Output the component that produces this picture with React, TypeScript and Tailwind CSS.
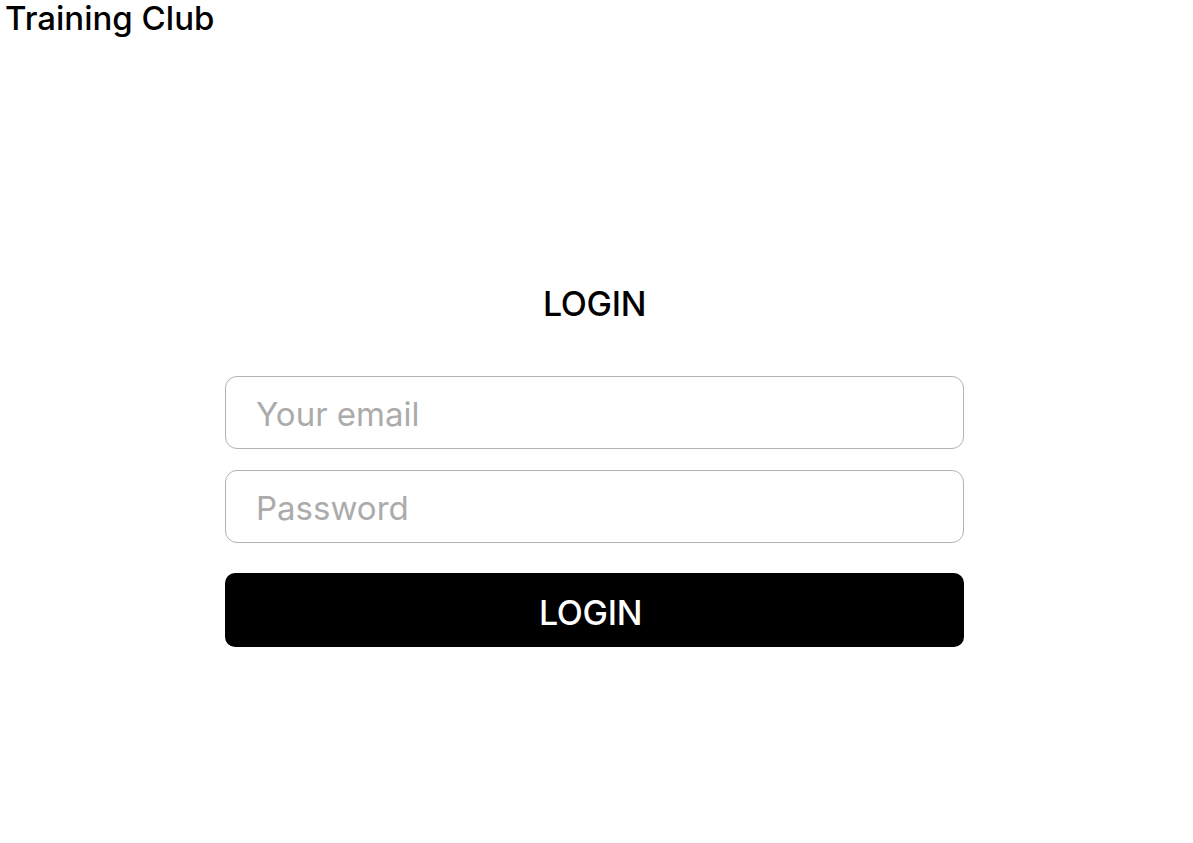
export default function App() {
  return (
    <div className="min-h-screen bg-white text-black" style={{ fontFamily: "Inter, 'Noto Sans', sans-serif" }}>
      <header className="px-[5px]">
        <h1 className="text-[33px] font-medium leading-[36px]">Training Club</h1>
      </header>

      <main className="flex flex-col items-center pt-[248px] pr-[4px]">
        <h2 className="text-[34px] font-medium leading-[40px] tracking-[-0.3px] mb-[52px]">LOGIN</h2>
        <form className="w-[739px] flex flex-col gap-[21px]">
          <input
            type="email"
            placeholder="Your email"
            className="h-[73px] w-full rounded-[12px] border border-[#b3b3b3] px-[30px] pt-[3px] text-[33px] placeholder:text-[#ababab] outline-none"
          />
          <input
            type="password"
            placeholder="Password"
            className="h-[73px] w-full rounded-[12px] border border-[#b3b3b3] px-[30px] pt-[3px] text-[33px] placeholder:text-[#ababab] outline-none"
          />
          <button
            type="button"
            className="mt-[9px] h-[74px] w-full rounded-[10px] bg-black pt-[4px] pr-[8px] text-white text-[34px] font-medium tracking-[-0.3px]"
          >
            LOGIN
          </button>
        </form>
      </main>
    </div>
  );
}
